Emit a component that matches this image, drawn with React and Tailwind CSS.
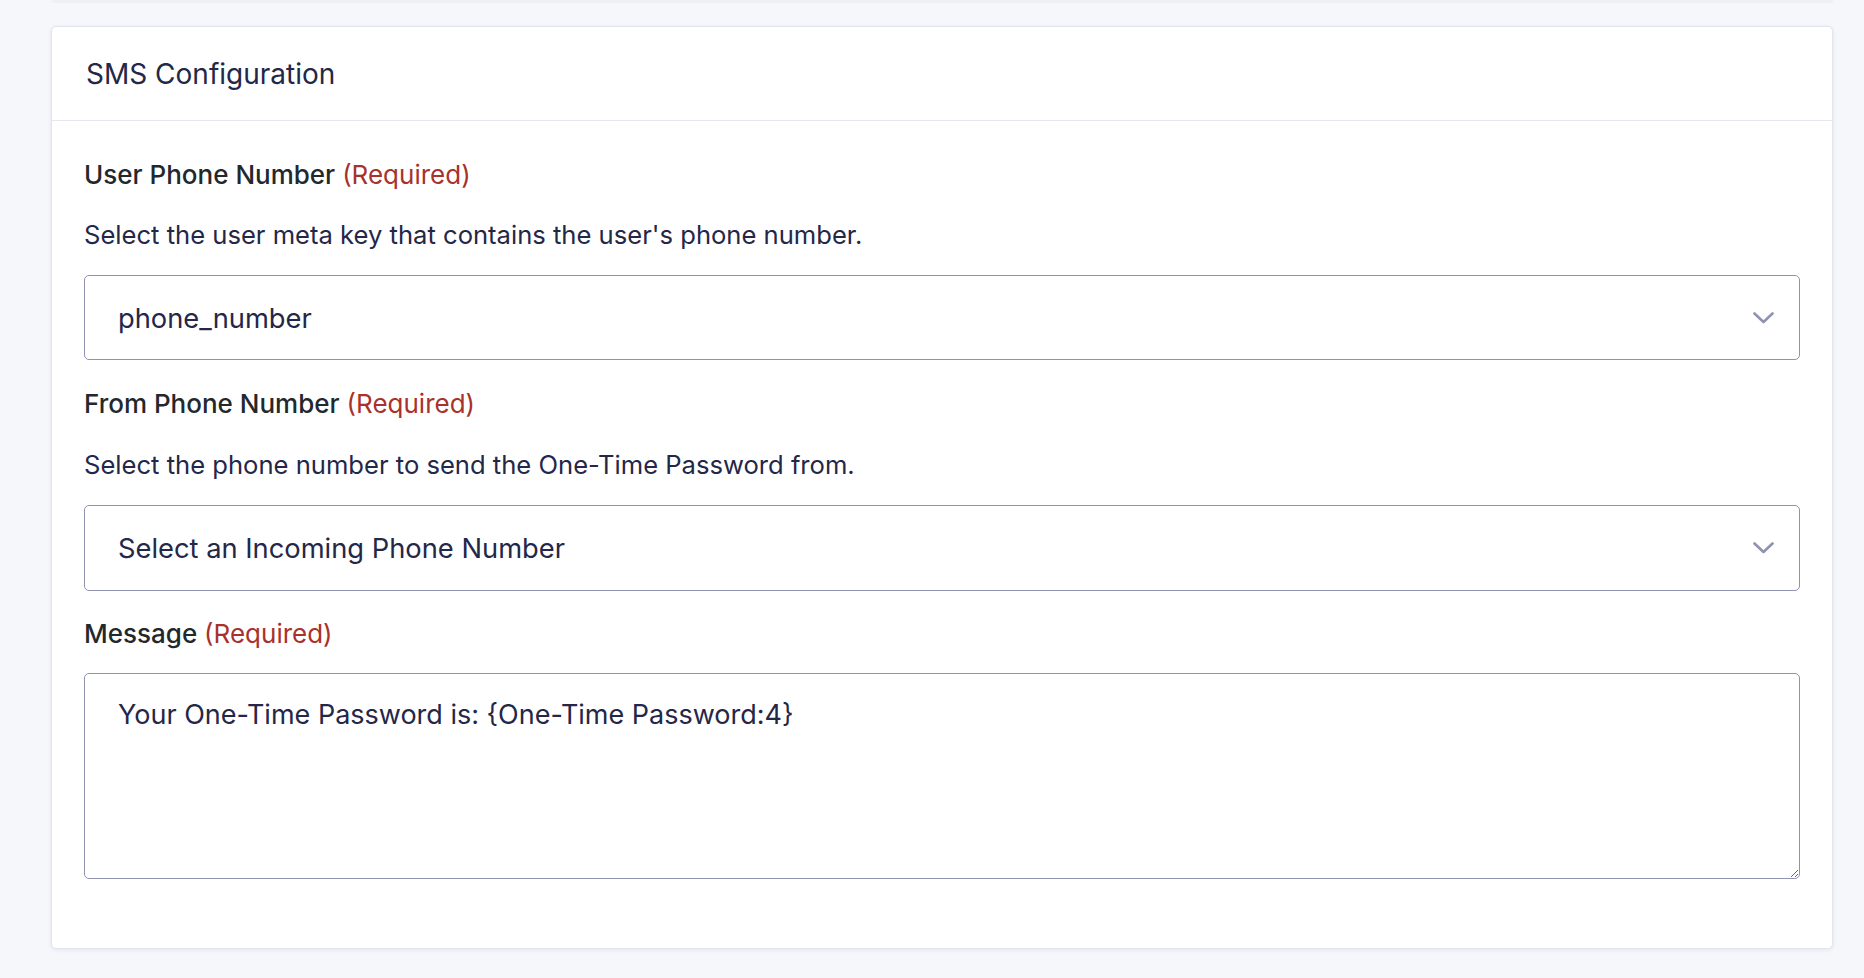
import React from "react";

const font = { fontFamily: "Inter, 'Noto Sans', sans-serif" };

function Chevron() {
  return (
    <svg width="21" height="12" viewBox="0 0 21 12" fill="none">
      <polyline points="1.5,1.5 10.5,10 19.5,1.5" stroke="#9092b2" strokeWidth="2.6" strokeLinecap="round" strokeLinejoin="round" />
    </svg>
  );
}

function FieldLabel({ children }) {
  return (
    <div className="h-[36px] leading-[36px] text-[26px] font-medium text-[#23282d]">
      {children} <span className="text-[#a8322c] font-normal">(Required)</span>
    </div>
  );
}

function SelectBox({ value }) {
  return (
    <div className="flex items-center justify-between h-full border border-[#9092b2] rounded-[5px] bg-white pl-[33px] pr-[25px]">
      <span className="pt-[3px] text-[27.3px] text-[#242748]">{value}</span>
      <Chevron />
    </div>
  );
}

export default function App() {
  return (
    <div className="min-h-screen bg-[#f6f7fb] pl-[51px] pr-[31px]" style={font}>
      <div className="h-[3px] bg-[#eef0f5] rounded-b-[4px]" />
      <div className="mt-[23px] bg-white border border-[#e3e5ec] rounded-[5px] shadow-[0_1px_4px_rgba(18,25,97,0.08)]">
        <div className="h-[94px] flex items-center px-[34px] border-b border-[#e6e7ee]">
          <h2 className="text-[28px] font-normal text-[#242748]">SMS Configuration</h2>
        </div>

        <div className="pt-[36px] px-[32px] pb-[69px]">
          <FieldLabel>User Phone Number</FieldLabel>
          <p className="mt-[24px] leading-[36px] text-[25.6px] text-[#242748]">
            Select the user meta key that contains the user's phone number.
          </p>
          <div className="mt-[22px] h-[85px]">
            <SelectBox value="phone_number" />
          </div>

          <div className="mt-[26px]">
            <FieldLabel>From Phone Number</FieldLabel>
          </div>
          <p className="mt-[25px] leading-[36px] text-[25.6px] text-[#242748]">
            Select the phone number to send the One-Time Password from.
          </p>
          <div className="mt-[22px] h-[86px]">
            <SelectBox value="Select an Incoming Phone Number" />
          </div>

          <div className="mt-[25px]">
            <FieldLabel>Message</FieldLabel>
          </div>
          <textarea
            className="mt-[21px] block w-full h-[206px] border border-[#9092b2] rounded-[5px] px-[33px] pt-[23px] text-[27px] leading-[36px] text-[#242748] outline-none"
            defaultValue="Your One-Time Password is: {One-Time Password:4}"
          />
        </div>
      </div>
    </div>
  );
}
